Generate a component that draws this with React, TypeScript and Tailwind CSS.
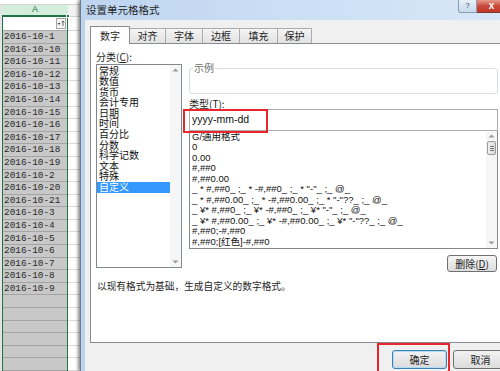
import React from "react";

const dates = [
  "2016-10-1", "2016-10-10", "2016-10-11", "2016-10-12", "2016-10-13", "2016-10-14",
  "2016-10-15", "2016-10-16", "2016-10-17", "2016-10-18", "2016-10-19", "2016-10-2",
  "2016-10-20", "2016-10-21", "2016-10-3", "2016-10-4", "2016-10-5", "2016-10-6",
  "2016-10-7", "2016-10-8", "2016-10-9", "", "", "", "", "", "",
];

const categories = [
  "常规", "数值", "货币", "会计专用", "日期", "时间",
  "百分比", "分数", "科学记数", "文本", "特殊", "自定义",
];

const formats = [
  "G/通用格式",
  "0",
  "0.00",
  "#,##0",
  "#,##0.00",
  '_ * #,##0_ ;_ * -#,##0_ ;_ * "-"_ ;_ @_',
  '_ * #,##0.00_ ;_ * -#,##0.00_ ;_ * "-"??_ ;_ @_',
  '_ ¥* #,##0_ ;_ ¥* -#,##0_ ;_ ¥* "-"_ ;_ @_',
  '_ ¥* #,##0.00_ ;_ ¥* -#,##0.00_ ;_ ¥* "-"??_ ;_ @_',
  "#,##0;-#,##0",
  "#,##0;[红色]-#,##0",
];

const tabs = [
  { label: "数字", w: "w-[40px]" },
  { label: "对齐", w: "w-[37px]" },
  { label: "字体", w: "w-[38px]" },
  { label: "边框", w: "w-[38px]" },
  { label: "填充", w: "w-[39px]" },
  { label: "保护", w: "w-[35px]" },
];

const cjk = "font-['Noto_Sans_CJK_SC',sans-serif]";
const latin = "font-['Liberation_Sans','Noto_Sans_CJK_SC',sans-serif]";

function Arrow({ up }: { up?: boolean }) {
  return (
    <svg width="7" height="4" viewBox="0 0 7 4">
      <path d={up ? "M0.5 3.5 L3.5 0.5 L6.5 3.5 Z" : "M0.5 0.5 L3.5 3.5 L6.5 0.5 Z"} fill="#9a9a9a" />
    </svg>
  );
}

function Sheet() {
  return (
    <div className="flex h-full w-[80px] shrink-0 flex-col bg-white">
      <div className="h-[17px] border-b border-[#d4d4d4] bg-white" />
      <div className="flex flex-1">
        {/* row headers (cut off) */}
        <div className="flex w-[2px] flex-col bg-[#e4e4e4]" />
        {/* column A */}
        <div className="flex w-[66px] flex-col">
          <div className="flex h-[12px] items-center justify-center border-b-2 border-[#217346] bg-[#d3eedd] text-[9px] leading-none text-[#217346] font-['Liberation_Sans',sans-serif]">
            A
          </div>
          <div className="flex flex-1 flex-col border-x border-[#217346]">
            <div className="relative flex h-[14px] items-center justify-end border-b border-[#a8a8a8] bg-white pr-[1px]">
              <div className="flex h-[11px] w-[10px] items-center justify-center border border-[#a6a6a6] bg-[#f4f4f4]">
                <svg width="8" height="7" viewBox="0 0 8 7">
                  <path d="M0.5 3 L3.5 3 L2 5 Z" fill="#444" />
                  <path d="M6 1 L6 6 M4.8 2.3 L6 1 L7.2 2.3" stroke="#444" strokeWidth="0.8" fill="none" />
                </svg>
              </div>
              <div className="absolute -right-[3px] -top-[3px] h-[4px] w-[4px] border border-white bg-[#217346]" />
            </div>
            {dates.map((d, i) => (
              <div
                key={i}
                className="flex h-[12.6px] shrink-0 items-center border-b border-[#a4a4a4] bg-[#c8c8c8] pl-[1px] text-[9.4px] leading-none text-[#2a2a2a] font-['Liberation_Mono',monospace]"
              >
                {d}
              </div>
            ))}
          </div>
        </div>
        {/* column B (cut off) */}
        <div className="flex flex-1 flex-col">
          <div className="h-[12px] border-b border-[#d4d4d4] bg-[#f3f3f3]" />
          <div className="h-[14px] border-b border-[#dadada]" />
          {dates.map((_, i) => (
            <div key={i} className="h-[12.6px] shrink-0 border-b border-[#dadada]" />
          ))}
        </div>
      </div>
    </div>
  );
}

function Dialog() {
  return (
    <div className={`flex h-full w-[440px] shrink-0 flex-col border-l border-[#6d7c90] bg-[#bcd3ee] shadow-[-2px_0_3px_rgba(0,0,0,0.45)] ${cjk}`}>
      {/* title bar */}
      <div className="flex h-[20px] shrink-0 items-start bg-gradient-to-r from-[#bed5f0] to-[#d9e8f8]">
        <div className="pl-[5px] pt-[3px] text-[10.5px] leading-[14px] text-[#1e1e1e]">设置单元格格式</div>
        <div className="ml-auto mr-[13px] flex">
          <div className="flex h-[13px] w-[19px] items-center justify-center rounded-bl-[3px] border border-t-0 border-[#8a9bb3] bg-gradient-to-b from-[#e8f0f9] to-[#c9daee] text-[8px] leading-none text-[#444] font-['Liberation_Sans',sans-serif]">
            ?
          </div>
          <div className="flex h-[13px] w-[30px] items-center justify-center rounded-br-[3px] border border-l-0 border-t-0 border-[#7a3a33] bg-gradient-to-b from-[#e5988c] via-[#c9493b] to-[#c2382a] text-[10px] font-bold leading-none text-white font-['Liberation_Sans',sans-serif]">
            x
          </div>
        </div>
      </div>
      {/* body */}
      <div className="ml-[4px] flex flex-1 flex-col bg-[#f0f0f0] pl-[5px]">
        {/* tabs */}
        <div className="flex h-[23px] shrink-0 items-end pt-[6px]">
          {tabs.map((t, i) =>
            i === 0 ? (
              <div
                key={t.label}
                className={`relative z-10 -mb-[1px] flex h-[18px] items-center justify-center border border-b-0 border-[#898c95] bg-white text-[10px] leading-none text-[#1e1e1e] ${t.w}`}
              >
                {t.label}
              </div>
            ) : (
              <div
                key={t.label}
                className={`-ml-[1px] flex h-[15px] items-center justify-center border border-b-0 border-[#acacac] bg-gradient-to-b from-[#f4f4f4] to-[#e2e2e2] text-[10px] leading-none text-[#1e1e1e] ${t.w}`}
              >
                {t.label}
              </div>
            )
          )}
        </div>
        {/* panel */}
        <div className="flex h-[300px] shrink-0 flex-col border border-r-0 border-[#898c95] bg-white pl-[5px] pt-[8px]">
          <div className="flex items-start">
            {/* category */}
            <div className="flex w-[86px] flex-col">
              <div className="h-[12px] text-[10px] leading-[10px] text-[#1e1e1e]">
                分类(<span className="underline">C</span>):
              </div>
              <div className="flex h-[204px] border border-[#828790] bg-white">
                <div className="flex flex-1 flex-col pt-[0.5px]">
                  {categories.map((c) => (
                    <div
                      key={c}
                      className={`h-[10.6px] pl-[2px] text-[10px] leading-[10.6px] ${
                        c === "自定义" ? "bg-[#3399ff] text-white" : "text-[#111]"
                      }`}
                    >
                      {c}
                    </div>
                  ))}
                </div>
                <div className="flex w-[11px] flex-col items-center justify-between bg-[#f6f6f6] py-[3px]">
                  <Arrow up />
                  <Arrow />
                </div>
              </div>
            </div>
            {/* right side */}
            <div className="ml-[1px] flex w-[315px] flex-col pl-[6px]">
              <div className="relative mt-[16px] h-[26px] rounded-[3px] border border-[#d5dfe5]">
                <span className="absolute -top-[6px] left-[3px] bg-white px-[1px] text-[10px] leading-[10px] text-[#6d6d6d]">
                  示例
                </span>
              </div>
              <div className="mt-[5px] h-[10px] text-[10px] leading-[10px] text-[#1e1e1e]">
                类型(<span className="underline">T</span>):
              </div>
              <div className={`relative flex h-[22px] items-center border border-[#abadb3] pl-[2px] text-[10.5px] text-[#111] ${latin}`}>
                yyyy-mm-dd
                <div className="absolute -left-[7px] -top-[1px] h-[24px] w-[85px] border-2 border-[#e8262c]" />
              </div>
              <div className="flex h-[118px] border border-t-0 border-[#828790]">
                <div className={`flex flex-1 flex-col pl-[2px] pt-[0.5px] ${latin}`}>
                  {formats.map((f) => (
                    <div key={f} className="h-[10.5px] whitespace-pre text-[9.5px] leading-[10.5px] text-[#111]">
                      {f}
                    </div>
                  ))}
                </div>
                <div className="flex w-[11px] flex-col items-center bg-[#f6f6f6] py-[3px]">
                  <Arrow up />
                  <div className="mt-[3px] flex h-[14px] w-[9px] flex-col items-center justify-center gap-[1px] rounded-[2px] border border-[#9b9b9b] bg-gradient-to-r from-[#f1f1f1] to-[#dcdcdc]">
                    <div className="h-px w-[4px] bg-[#777]" />
                    <div className="h-px w-[4px] bg-[#777]" />
                    <div className="h-px w-[4px] bg-[#777]" />
                  </div>
                  <div className="mt-auto">
                    <Arrow />
                  </div>
                </div>
              </div>
              <div className="mr-[1px] mt-[6px] flex h-[17px] w-[50px] items-center justify-center self-end rounded-[3px] border border-[#707070] bg-gradient-to-b from-[#f6f6f6] to-[#dddddd] text-[10px] leading-none text-[#1e1e1e]">
                删除(<span className="underline">D</span>)
              </div>
            </div>
          </div>
          <div className="ml-[1px] mt-[9px] text-[9.7px] leading-[10px] text-[#1e1e1e]">
            以现有格式为基础，生成自定义的数字格式。
          </div>
        </div>
        {/* buttons */}
        <div className="flex gap-[6px] pl-[302px] pt-[7px]">
          <div className="relative flex h-[19px] w-[55px] items-center justify-center rounded-[3px] border border-[#3c7fb1] bg-gradient-to-b from-[#f2f2f2] to-[#dcdcdc] text-[10px] leading-none text-[#1e1e1e] shadow-[inset_0_0_0_1px_#b4dcf6]">
            确定
            <div className="absolute -left-[16px] -top-[8px] h-[40px] w-[73px] border-2 border-[#e8262c]" />
          </div>
          <div className="flex h-[19px] w-[55px] items-center justify-center rounded-[3px] border border-[#707070] bg-gradient-to-b from-[#f2f2f2] to-[#dcdcdc] text-[10px] leading-none text-[#1e1e1e]">
            取消
          </div>
        </div>
      </div>
    </div>
  );
}

export default function App() {
  return (
    <div className="flex h-[371px] w-[500px] overflow-hidden bg-white">
      <Sheet />
      <Dialog />
    </div>
  );
}
